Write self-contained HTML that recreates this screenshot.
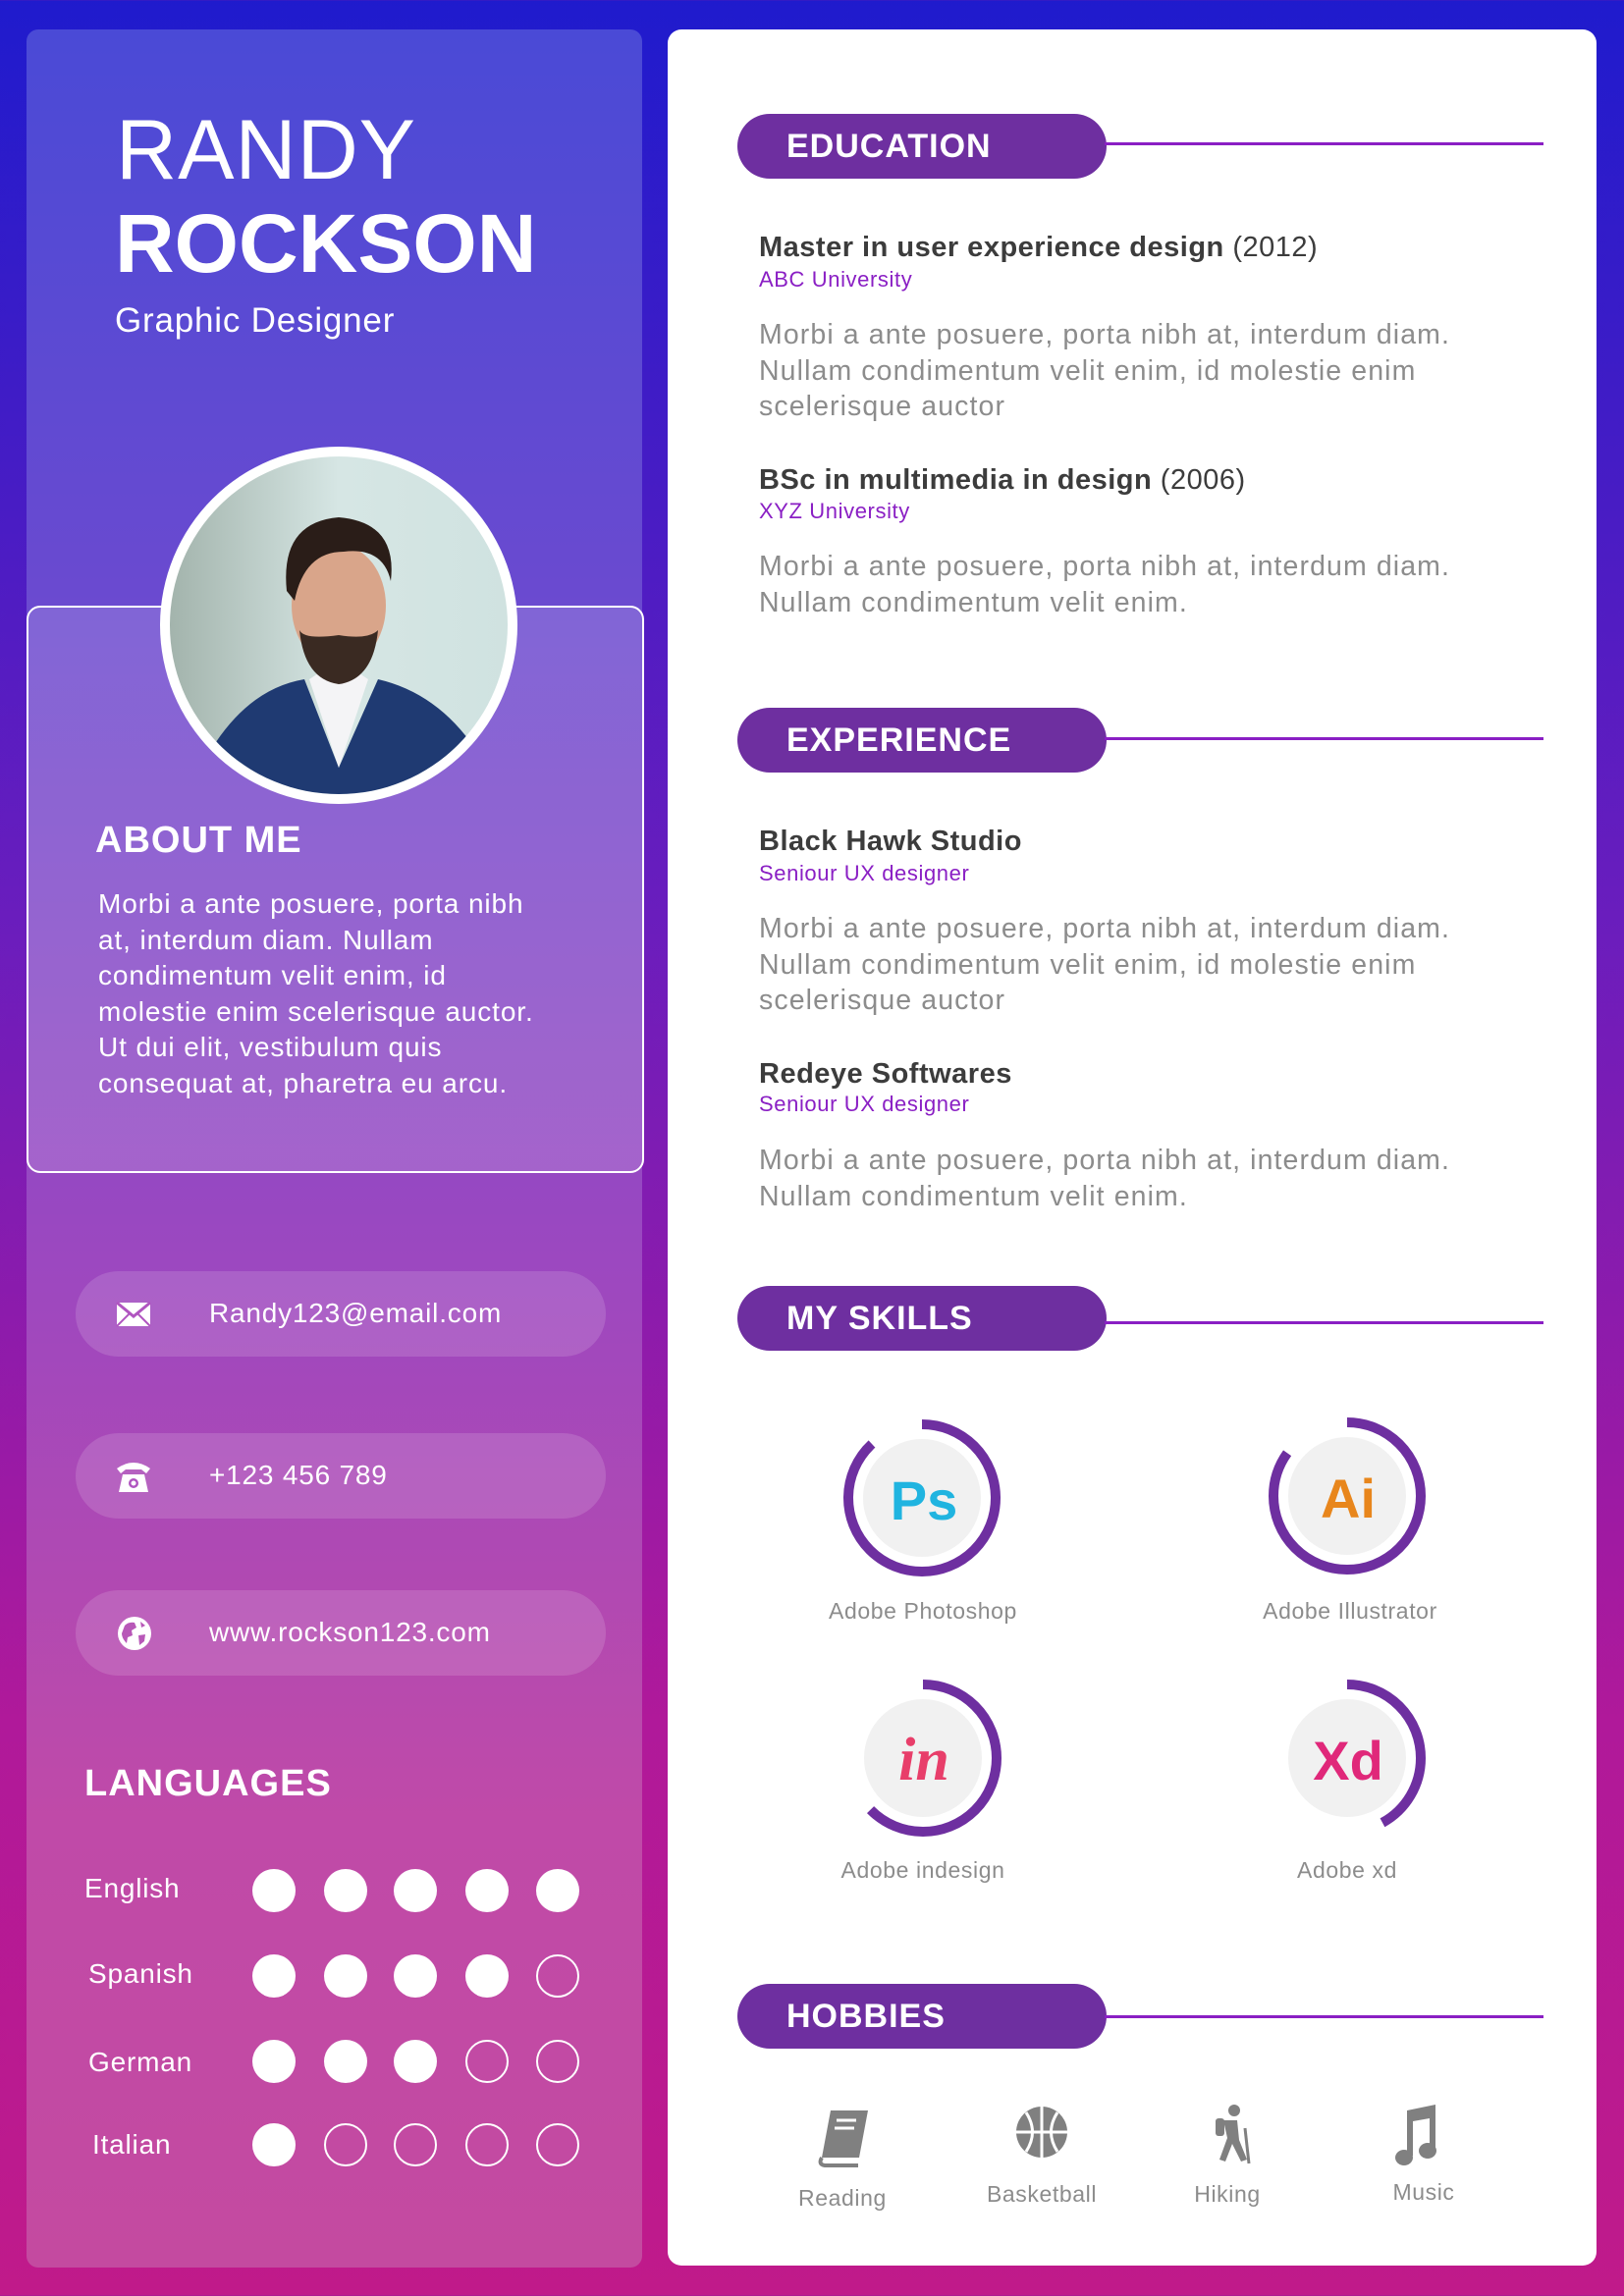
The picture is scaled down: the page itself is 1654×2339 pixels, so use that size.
<!DOCTYPE html>
<html><head><meta charset="utf-8"><style>
*{margin:0;padding:0;box-sizing:border-box}
body{width:1654px;height:2339px;position:relative;overflow:hidden;font-family:"Liberation Sans",sans-serif;background:linear-gradient(180deg,#1f1bcd 0%,#6a1dbd 40%,#b0199a 75%,#c01a8a 100%)}
.a{position:absolute}
#left{left:27px;top:30px;width:627px;height:2280px;border-radius:12px;background:linear-gradient(180deg,#4a4ad6 0%,#6a4ad0 25%,#9c48c0 55%,#c04aa8 80%,#c44aa0 100%)}
#right{left:680px;top:30px;width:946px;height:2278px;border-radius:14px;background:#fff}
.w{color:#fff}
#about{left:27px;top:617px;width:629px;height:578px;border:2.5px solid #fff;border-radius:14px;background:rgba(255,255,255,0.15)}
.pill{left:77px;width:540px;height:87px;border-radius:44px;background:rgba(255,255,255,0.14)}
.pill span{position:absolute;left:136px;top:27px;font-size:28px;color:#fff;letter-spacing:0.8px}
.pill svg{position:absolute;left:40px;top:24px}
.lang{left:86px;font-size:28px;color:#fff;letter-spacing:0.8px}
.dot{width:44px;height:44px;border-radius:50%;background:#fff}
.o{background:none;border:2.5px solid #fff}
.hd{left:751px;width:376px;height:66px;border-radius:33px;background:#6e2fa0;color:#fff;font-weight:bold;font-size:34px;padding-left:50px;line-height:66px;letter-spacing:1px}
.ln{left:1125px;width:447px;height:3px;background:#8a1fc4}
.t{left:773px;font-size:29px;font-weight:bold;color:#3c3c3c;letter-spacing:0.5px}
.t span{font-weight:normal}
.s{left:773px;font-size:22px;color:#8a1fc4;letter-spacing:0.6px}
.b{left:773px;font-size:28.5px;color:#8c8c8c;line-height:36.5px;width:900px;letter-spacing:1.1px;white-space:nowrap}
.lab{font-size:23px;color:#8c8c8c;text-align:center;width:300px;letter-spacing:0.6px}
</style></head><body>
<div id="left" class="a"></div>
<div id="right" class="a"></div>
<div class="a w" style="left:118px;top:104px;font-size:86px;letter-spacing:1px">RANDY</div>
<div class="a w" style="left:117px;top:200px;font-size:84px;font-weight:bold">ROCKSON</div>
<div class="a w" style="left:117px;top:307px;font-size:35px;letter-spacing:0.8px">Graphic Designer</div>
<div id="about" class="a"></div>
<svg class="a" style="left:160px;top:452px" width="370" height="370">
<defs><clipPath id="c"><circle cx="185" cy="185" r="172"/></clipPath>
<linearGradient id="bg" x1="0" x2="1"><stop offset="0" stop-color="#9fb0a8"/><stop offset=".5" stop-color="#d6e6e4"/><stop offset="1" stop-color="#cfe2e0"/></linearGradient></defs>
<circle cx="185" cy="185" r="182" fill="#fff"/>
<g clip-path="url(#c)"><rect width="370" height="370" fill="url(#bg)"/>
<path d="M50 320 Q90 250 150 240 L185 330 L225 240 Q290 255 330 320 L330 370 L50 370Z" fill="#1f3a72"/>
<path d="M155 240 L185 330 L215 240 L200 230 L170 230Z" fill="#f4f4f6"/>
<ellipse cx="185" cy="165" rx="48" ry="62" fill="#d9a58a"/>
<path d="M185 195 Q150 200 145 190 Q150 240 185 245 Q220 240 225 190 Q215 200 185 195Z" fill="#3a2a22"/>
<path d="M132 150 Q125 80 185 75 Q245 80 238 140 Q230 105 190 110 Q150 110 140 160Z" fill="#2a1d18"/></g>
</svg>
<div class="a w" style="left:97px;top:835px;font-size:38px;font-weight:bold;letter-spacing:1px">ABOUT ME</div>
<div class="a w" style="left:100px;top:903px;font-size:28px;line-height:36.5px;white-space:nowrap;letter-spacing:0.9px">Morbi a ante posuere, porta nibh<br>at, interdum diam. Nullam<br>condimentum velit enim, id<br>molestie enim scelerisque auctor.<br>Ut dui elit, vestibulum quis<br>consequat at, pharetra eu arcu.</div>
<div class="a pill" style="top:1295px"><svg width="38" height="40" viewBox="0 0 38 40"><rect x="2" y="8" width="34" height="24" fill="#fff"/><path d="M2 8 L19 22 L36 8" fill="none" stroke="#b055c0" stroke-width="3"/><path d="M2 32 L15 19 M36 32 L23 19" stroke="#b055c0" stroke-width="2"/></svg><span>Randy123@email.com</span></div>
<div class="a pill" style="top:1460px"><svg width="38" height="40" viewBox="0 0 38 40"><path d="M2 12 Q19 0 36 12 L32 17 L27 13 L11 13 L6 17Z" fill="#fff"/><path d="M8 18 L30 18 L34 36 L4 36Z" fill="#fff"/><circle cx="19" cy="27" r="5" fill="#b055c0"/><circle cx="19" cy="27" r="2.5" fill="#fff"/></svg><span>+123 456 789</span></div>
<div class="a pill" style="top:1620px"><svg width="40" height="40" viewBox="0 0 40 40"><circle cx="20" cy="20" r="17" fill="#fff"/><path d="M10 12 Q14 8 20 9 L22 14 L17 17 L18 22 L13 24 L12 30 Q7 25 7 20Z M24 22 L31 21 L30 28 L25 32 Z M26 8 L31 12 L27 14Z" fill="#b858b8"/></svg><span>www.rockson123.com</span></div>
<div class="a w" style="left:86px;top:1796px;font-size:38px;font-weight:bold;letter-spacing:1px">LANGUAGES</div>
<div class="a lang" style="top:1908px">English</div>
<div class="a lang" style="top:1995px;left:90px">Spanish</div>
<div class="a lang" style="top:2085px;left:90px">German</div>
<div class="a lang" style="top:2169px;left:94px">Italian</div>
<div class="a dot" style="left:257px;top:1904px"></div><div class="a dot" style="left:330px;top:1904px"></div><div class="a dot" style="left:401px;top:1904px"></div><div class="a dot" style="left:474px;top:1904px"></div><div class="a dot" style="left:546px;top:1904px"></div>
<div class="a dot" style="left:257px;top:1991px"></div><div class="a dot" style="left:330px;top:1991px"></div><div class="a dot" style="left:401px;top:1991px"></div><div class="a dot" style="left:474px;top:1991px"></div><div class="a dot o" style="left:546px;top:1991px"></div>
<div class="a dot" style="left:257px;top:2078px"></div><div class="a dot" style="left:330px;top:2078px"></div><div class="a dot" style="left:401px;top:2078px"></div><div class="a dot o" style="left:474px;top:2078px"></div><div class="a dot o" style="left:546px;top:2078px"></div>
<div class="a dot" style="left:257px;top:2163px"></div><div class="a dot o" style="left:330px;top:2163px"></div><div class="a dot o" style="left:401px;top:2163px"></div><div class="a dot o" style="left:474px;top:2163px"></div><div class="a dot o" style="left:546px;top:2163px"></div>

<div class="a hd" style="top:116px">EDUCATION</div><div class="a ln" style="top:145px"></div>
<div class="a t" style="top:236px">Master in user experience design <span>(2012)</span></div>
<div class="a s" style="top:272px">ABC University</div>
<div class="a b" style="top:323px">Morbi a ante posuere, porta nibh at, interdum diam.<br>Nullam condimentum velit enim, id molestie enim<br>scelerisque auctor</div>
<div class="a t" style="top:473px">BSc in multimedia in design <span>(2006)</span></div>
<div class="a s" style="top:508px">XYZ University</div>
<div class="a b" style="top:559px">Morbi a ante posuere, porta nibh at, interdum diam.<br>Nullam condimentum velit enim.</div>

<div class="a hd" style="top:721px">EXPERIENCE</div><div class="a ln" style="top:751px"></div>
<div class="a t" style="top:841px">Black Hawk Studio</div>
<div class="a s" style="top:877px">Seniour UX designer</div>
<div class="a b" style="top:928px">Morbi a ante posuere, porta nibh at, interdum diam.<br>Nullam condimentum velit enim, id molestie enim<br>scelerisque auctor</div>
<div class="a t" style="top:1078px">Redeye Softwares</div>
<div class="a s" style="top:1112px">Seniour UX designer</div>
<div class="a b" style="top:1164px">Morbi a ante posuere, porta nibh at, interdum diam.<br>Nullam condimentum velit enim.</div>

<div class="a hd" style="top:1310px">MY SKILLS</div><div class="a ln" style="top:1346px"></div>
<svg class="a" style="left:0;top:0" width="1654" height="2339">
<g fill="none" stroke="#6e2fa0" stroke-width="10" stroke-linecap="butt">
<circle cx="939" cy="1526" r="75" stroke-dasharray="415 500" transform="rotate(-90 939 1526)"/>
<circle cx="1372" cy="1524" r="75" stroke-dasharray="400 500" transform="rotate(-90 1372 1524)"/>
<circle cx="940" cy="1791" r="75" stroke-dasharray="295 500" transform="rotate(-90 940 1791)"/>
<circle cx="1372" cy="1791" r="75" stroke-dasharray="198 500" transform="rotate(-90 1372 1791)"/>
</g>
<g fill="#f1f1f1"><circle cx="939" cy="1526" r="60"/><circle cx="1372" cy="1524" r="60"/><circle cx="940" cy="1791" r="60"/><circle cx="1372" cy="1791" r="60"/></g>
<g font-family="Liberation Sans,sans-serif" font-weight="bold" text-anchor="middle" font-size="56">
<text x="941" y="1548" fill="#20b4e0">Ps</text>
<text x="1373" y="1546" fill="#e8861c">Ai</text>
<text x="941" y="1813" fill="#e83e6a" font-style="italic" font-family="Liberation Serif,serif" font-size="62">in</text>
<text x="1373" y="1813" fill="#e0287a">Xd</text>
</g>
</svg>
<div class="a lab" style="left:790px;top:1628px">Adobe Photoshop</div>
<div class="a lab" style="left:1225px;top:1628px">Adobe Illustrator</div>
<div class="a lab" style="left:790px;top:1892px">Adobe indesign</div>
<div class="a lab" style="left:1222px;top:1892px">Adobe xd</div>

<div class="a hd" style="top:2021px">HOBBIES</div><div class="a ln" style="top:2053px"></div>
<svg class="a" style="left:0;top:0" width="1654" height="2339" fill="#808080">
<path d="M846 2150 L884 2150 L875 2198 L837 2198 Z" /><path d="M837 2198 Q833 2205 840 2206 L874 2206" fill="none" stroke="#808080" stroke-width="4"/><path d="M852 2160 L872 2160 M850 2168 L870 2168" stroke="#fff" stroke-width="3"/>
<circle cx="1061" cy="2172" r="26"/><path d="M1035 2172 H1087 M1061 2146 V2198 M1045 2152 Q1058 2172 1045 2192 M1077 2152 Q1064 2172 1077 2192" fill="none" stroke="#fff" stroke-width="3"/>
<circle cx="1257" cy="2150" r="6"/><path d="M1246 2160 L1260 2160 L1262 2180 L1270 2200 L1264 2202 L1255 2184 L1248 2202 L1242 2200 L1250 2178Z"/><rect x="1238" y="2158" width="9" height="18" rx="3"/><path d="M1268 2168 L1272 2204" stroke="#808080" stroke-width="3"/>
<path d="M1433 2150 L1462 2144 L1462 2190 L1456 2190 L1456 2158 L1439 2161 L1439 2196 L1433 2196Z"/><ellipse cx="1430" cy="2198" rx="9" ry="8"/><ellipse cx="1454" cy="2191" rx="9" ry="8"/>
</svg>
<div class="a lab" style="left:708px;top:2226px">Reading</div>
<div class="a lab" style="left:911px;top:2222px">Basketball</div>
<div class="a lab" style="left:1100px;top:2222px">Hiking</div>
<div class="a lab" style="left:1300px;top:2220px">Music</div>
</body></html>
